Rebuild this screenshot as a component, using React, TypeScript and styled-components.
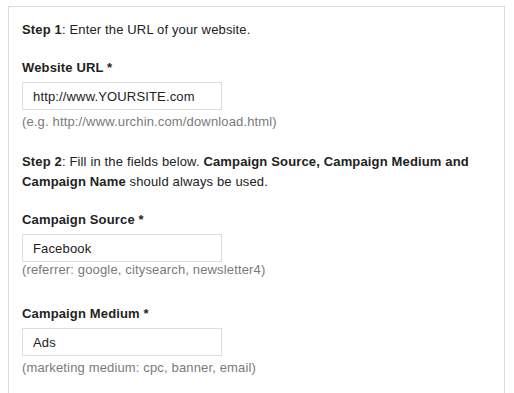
import React from "react";
import styled, { createGlobalStyle } from "styled-components";

const GlobalStyle = createGlobalStyle`
  html, body { margin: 0; padding: 0; background: #ffffff; }
  body {
    font-family: "Liberation Sans", Arial, Helvetica, sans-serif;
    font-size: 13px;
    letter-spacing: 0.15px;
    color: #222222;
    -webkit-font-smoothing: antialiased;
  }
`;

const Page = styled.div`
  padding: 6px 9px 0 8px;
  height: 393px;
  box-sizing: border-box;
  overflow: hidden;
`;

const Panel = styled.div`
  border: 1px solid #dadada;
  border-bottom: none;
  padding: 13px 13px 40px 13px;
  min-height: 420px;
  box-sizing: border-box;
`;

const Step = styled.p<{ $top?: number }>`
  margin: ${(p) => p.$top ?? 0}px 0 0 0;
  line-height: 20px;
  color: #222222;
`;

const Field = styled.div<{ $top: number }>`
  display: flex;
  flex-direction: column;
  align-items: flex-start;
  margin-top: ${(p) => p.$top}px;
`;

const Label = styled.label`
  font-weight: bold;
  line-height: 20px;
  color: #1f1f1f;
  margin-bottom: 4px;
`;

const TextInput = styled.input`
  box-sizing: border-box;
  width: 200px;
  height: 28px;
  margin: 0;
  padding: 0 10px;
  border: 1px solid #dedede;
  border-radius: 0;
  background: #ffffff;
  font-family: "Liberation Sans", Arial, Helvetica, sans-serif;
  font-size: 13px;
  letter-spacing: 0.15px;
  color: #222222;
  outline: none;
`;

const Hint = styled.div<{ $gap: number }>`
  margin-top: ${(p) => p.$gap}px;
  line-height: 20px;
  color: #7a7a7a;
`;

type FieldProps = {
  label: string;
  value: string;
  hint: string;
  top: number;
  hintGap: number;
};

const FormField = ({ label, value, hint, top, hintGap }: FieldProps) => (
  <Field $top={top}>
    <Label>{label}</Label>
    <TextInput type="text" value={value} readOnly />
    <Hint $gap={hintGap}>{hint}</Hint>
  </Field>
);

export default function App() {
  return (
    <>
      <GlobalStyle />
      <Page>
        <Panel>
          <Step>
            <b>Step 1</b>: Enter the URL of your website.
          </Step>
          <FormField
            top={18}
            label="Website URL *"
            value="http://www.YOURSITE.com"
            hint="(e.g. http://www.urchin.com/download.html)"
            hintGap={2}
          />
          <Step $top={20}>
            <b>Step 2</b>: Fill in the fields below.{" "}
            <b>Campaign Source, Campaign Medium and Campaign Name</b> should
            always be used.
          </Step>
          <FormField
            top={18}
            label="Campaign Source *"
            value="Facebook"
            hint="(referrer: google, citysearch, newsletter4)"
            hintGap={-2}
          />
          <FormField
            top={24}
            label="Campaign Medium *"
            value="Ads"
            hint="(marketing medium: cpc, banner, email)"
            hintGap={2}
          />
        </Panel>
      </Page>
    </>
  );
}
